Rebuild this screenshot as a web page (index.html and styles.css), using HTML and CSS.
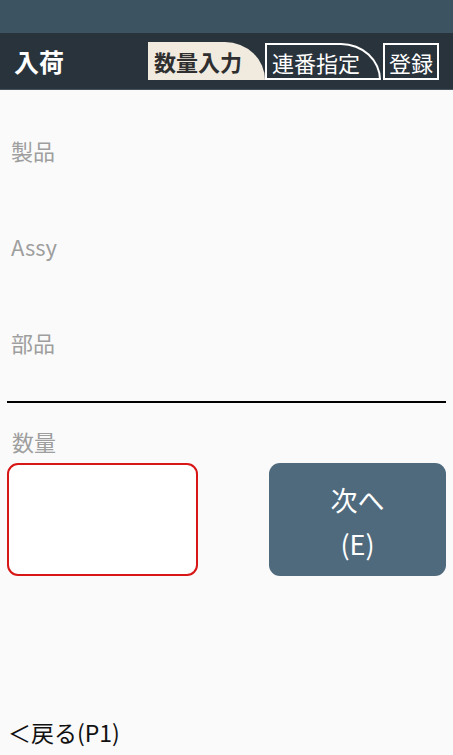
FILE: index.html
```html
<!DOCTYPE html>
<html lang="ja">
<head>
<meta charset="utf-8">
<link rel="stylesheet" href="styles.css">
</head>
<body>
<div class="statusbar"></div>
<header class="header">
  <div class="title">入荷</div>
  <nav class="tabs">
    <div class="tab tab-active">数量入力</div>
    <div class="tab tab-next">連番指定</div>
    <div class="tab tab-last">登録</div>
  </nav>
</header>
<main class="main">
  <div class="field"><span class="label">製品</span></div>
  <div class="field"><span class="label">Assy</span></div>
  <div class="field"><span class="label">部品</span></div>
  <div class="divider"></div>
  <div class="qty-label">数量</div>
  <div class="qty-row">
    <div class="qty-input"></div>
    <div class="next-btn">次へ<br>(E)</div>
  </div>
</main>
<footer class="footer">＜戻る(P1)</footer>
</body>
</html>
```

FILE: styles.css
```css
* { box-sizing: border-box; }
html, body {
  margin: 0;
  padding: 0;
  width: 453px;
  height: 755px;
  background: #fafafa;
  font-family: "Noto Sans CJK JP", "Noto Sans", sans-serif;
  overflow: hidden;
}
.statusbar {
  height: 33px;
  background: #3c5361;
}
.header {
  height: 57px;
  background: #29333c;
  border-bottom: 1px solid #46525c;
  display: flex;
  align-items: center;
  padding-left: 14px;
}
.title {
  color: #fff;
  font-weight: 700;
  font-size: 25px;
  line-height: 1;
  width: 134px;
  padding-top: 1px;
}
.tabs {
  display: flex;
  align-items: flex-start;
  height: 38px;
}
.tab {
  height: 38px;
  font-size: 22px;
  line-height: 38px;
  white-space: nowrap;
}
.tab-active {
  width: 117px;
  background: #f1ebdf;
  color: #2f2f2f;
  font-weight: 700;
  padding-left: 6px;
  border-top-right-radius: 40px 38px;
}
.tab-next {
  width: 116px;
  color: #fff;
  border: 2px solid #fff;
  border-top-right-radius: 40px 37px;
  padding-left: 5px;
  margin-top: 1px;
  height: 37px;
  line-height: 35px;
}
.tab-last {
  width: 56px;
  margin-left: 2px;
  color: #fff;
  border: 2px solid #fff;
  padding-left: 4px;
  margin-top: 1px;
  height: 37px;
  line-height: 35px;
}
.main {
  padding: 12px 7px 0 7px;
}
.field {
  height: 96px;
  display: flex;
  align-items: center;
  padding-left: 4px;
}
.label {
  color: #9e9e9e;
  font-size: 22px;
}
.divider {
  height: 2px;
  background: #000;
  margin-top: 11px;
}
.qty-label {
  color: #9e9e9e;
  font-size: 22px;
  height: 45px;
  display: flex;
  align-items: center;
  padding-left: 5px;
  margin-top: 15px;
}
.qty-row {
  display: flex;
  justify-content: space-between;
  height: 113px;
}
.qty-input {
  width: 191px;
  background: #fff;
  border: 2px solid #d81616;
  border-radius: 11px;
}
.next-btn {
  width: 177px;
  background: #4f6a7d;
  border-radius: 11px;
  color: #fff;
  font-size: 27px;
  line-height: 44px;
  padding-top: 5px;
  text-align: center;
  display: flex;
  align-items: center;
  justify-content: center;
}
.footer {
  position: absolute;
  left: 8px;
  top: 715px;
  font-size: 23px;
  color: #111;
}
```
